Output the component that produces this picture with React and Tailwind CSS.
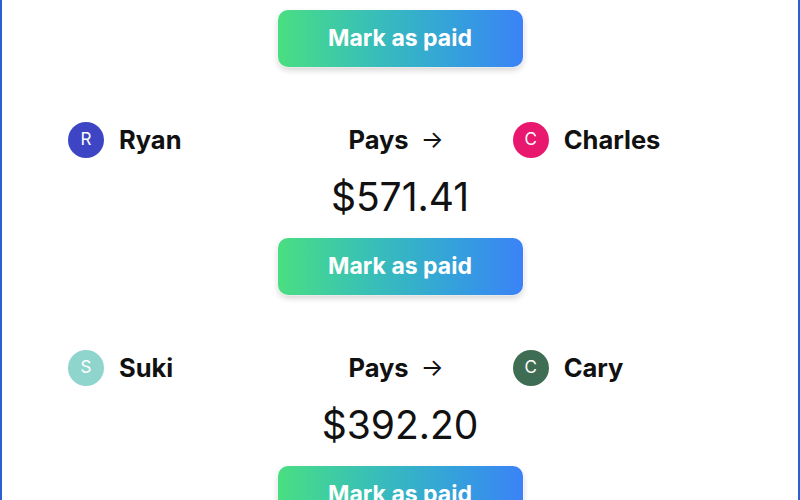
import React from 'react';

const payments = [
  { from: { name: 'Ryan', color: 'bg-[#3d45c4]' }, to: { name: 'Charles', color: 'bg-[#e8186f]' }, amount: '$571.41' },
  { from: { name: 'Suki', color: 'bg-[#8fd4cd]' }, to: { name: 'Cary', color: 'bg-[#3f6d54]' }, amount: '$392.20' },
];

const Avatar = ({ person }) => (
  <div className="flex items-center gap-[15px]">
    <div className={`w-9 h-9 rounded-full ${person.color} flex items-center justify-center text-white text-[17px]`}>
      {person.name[0]}
    </div>
    <span className="text-[25.5px] font-bold text-[#111]">{person.name}</span>
  </div>
);

const PaidButton = () => (
  <button className="w-[245px] h-[57px] rounded-[10px] bg-linear-to-r from-[#4ade80] to-[#3b82f6] text-white text-[23px] font-bold shadow-[0_3px_6px_rgba(0,0,0,0.18)] ring-1 ring-white/40">
    Mark as paid
  </button>
);

const App = () => {
  return (
    <div className="h-[500px] overflow-hidden bg-white border-x-2 border-[#2a5fd0]" style={{ fontFamily: 'Inter, "Noto Sans", sans-serif' }}>
      <div className="flex flex-col items-center pt-[10px]">
        <PaidButton />
      </div>

      {payments.map((p) => (
        <div key={p.from.name} className="mt-[54px] flex flex-col items-center">
          <div className="w-full grid grid-cols-3 items-center px-[66px] h-9">
            <Avatar person={p.from} />
            <div className="flex items-center justify-center gap-3 text-[25.5px] font-bold text-[#111] pr-2">
              <span>Pays</span>
              <span className="font-normal text-[24px]">→</span>
            </div>
            <div className="pl-0.5">
              <Avatar person={p.to} />
            </div>
          </div>
          <div className="mt-5 h-10 flex items-center text-[39px] text-[#111]">{p.amount}</div>
          <div className="mt-[21px]">
            <PaidButton />
          </div>
        </div>
      ))}
    </div>
  );
};

export default App;
